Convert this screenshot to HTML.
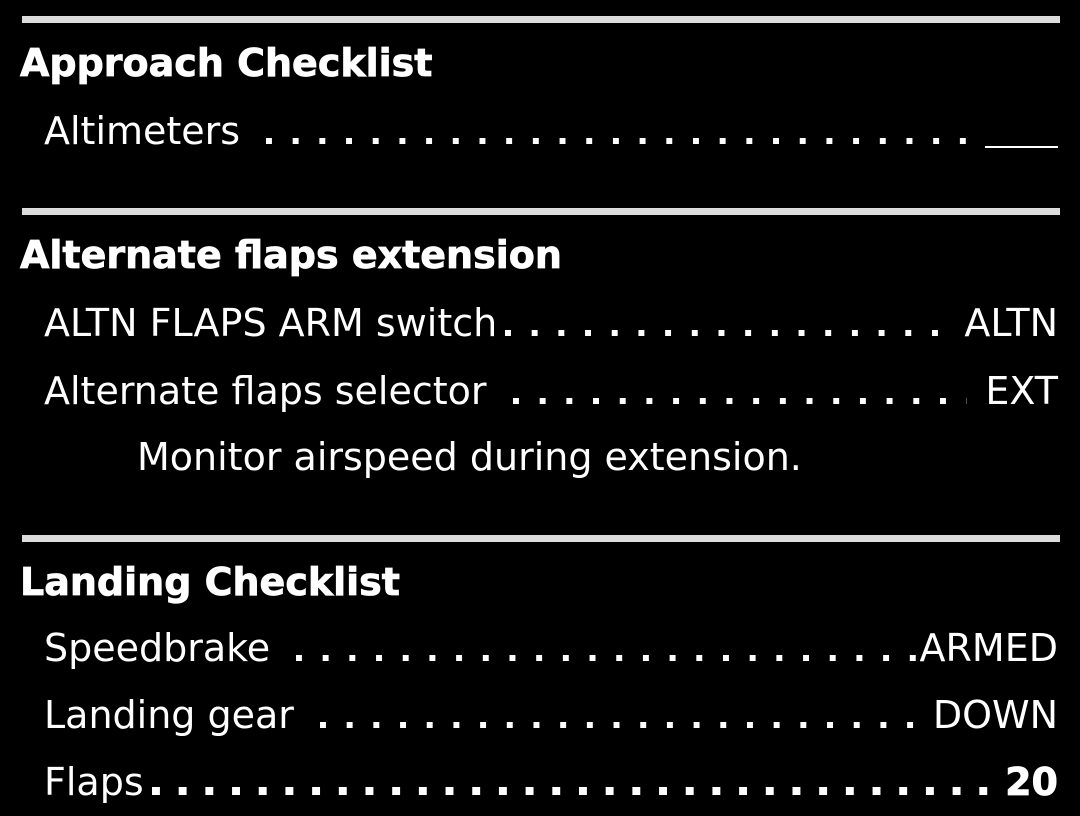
<!DOCTYPE html>
<html><head><style>
body{margin:0;width:1080px;height:816px;background:#000;color:#fff;font-family:"DejaVu Sans","Liberation Sans",sans-serif;position:relative;overflow:hidden}
.bar{position:absolute;left:22px;width:1038px;height:7px;background:#dcdcdc}
.h{position:absolute;left:20px;font-size:38px;font-weight:bold;line-height:44px;white-space:nowrap;-webkit-text-stroke:0.8px #fff}
.r{position:absolute;left:44px;width:1014px;font-size:38px;line-height:44px;display:flex;white-space:nowrap}
.d{flex:1;margin:0 18px 0 26px;height:44px;background:linear-gradient(to right,#fff 6px,transparent 6px) repeat-x;background-size:26.7px 6px;background-position:0 29px}
.n{position:absolute;left:137px;font-size:38px;line-height:44px;white-space:nowrap}
</style></head><body>
<div class="bar" style="top:16px"></div>
<div class="h" style="top:41px">Approach Checklist</div>
<div class="r" style="top:109px"><span>Altimeters</span><span class="d"></span><span style="display:inline-block;width:73px;border-bottom:2px solid #fff;height:37px"></span></div>
<div class="bar" style="top:208px"></div>
<div class="h" style="top:233px">Alternate flaps extension</div>
<div class="r" style="top:301px"><span>ALTN FLAPS ARM switch</span><span class="d" style="margin-left:8px"></span><span>ALTN</span></div>
<div class="r" style="top:369px"><span>Alternate flaps selector</span><span class="d"></span><span>EXT</span></div>
<div class="n" style="top:435px">Monitor airspeed during extension.</div>
<div class="bar" style="top:535px"></div>
<div class="h" style="top:560px">Landing Checklist</div>
<div class="r" style="top:626px"><span>Speedbrake</span><span class="d" style="margin-right:2px"></span><span>ARMED</span></div>
<div class="r" style="top:693px"><span>Landing gear</span><span class="d"></span><span>DOWN</span></div>
<div class="r" style="top:760px"><span>Flaps</span><span class="d" style="margin:0 2px 0 8px;background-image:linear-gradient(to right,#fff 8px,transparent 8px);background-size:26.7px 8px;background-position:0 27px"></span><span style="font-weight:bold;-webkit-text-stroke:0.8px #fff">20</span></div>
</body></html>
